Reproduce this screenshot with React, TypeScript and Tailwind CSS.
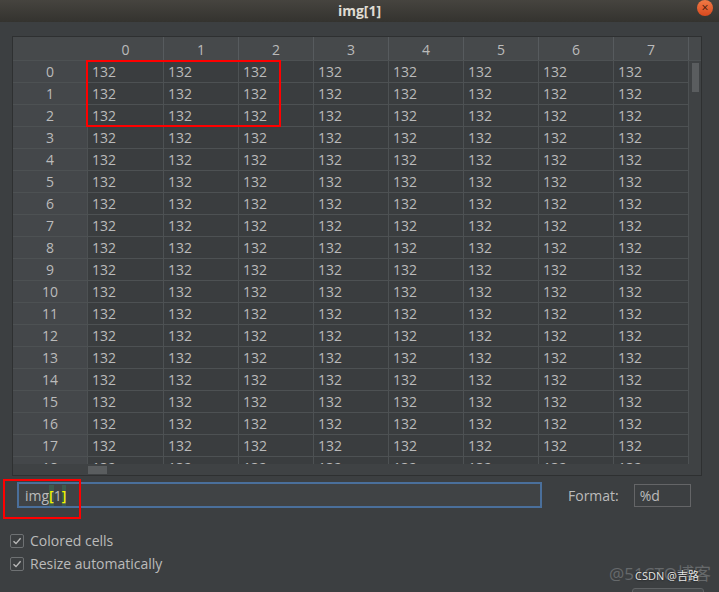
import React from 'react'

const cols = [0, 1, 2, 3, 4, 5, 6, 7]
const rows = Array.from({ length: 19 }, (_, i) => i)

const Check = () => (
  <div className="flex h-[14px] w-[14px] items-center justify-center rounded-[2px] border border-[#6e7173] bg-[#3c3f41]">
    <svg width="10" height="10" viewBox="0 0 10 10">
      <path d="M1.5 5.2 L4 7.6 L8.6 2.2" fill="none" stroke="#b9b9b9" strokeWidth="1.4" />
    </svg>
  </div>
)

const App = () => {
  return (
    <div
      className="relative flex h-[592px] w-[719px] flex-col overflow-hidden bg-[#3c3f41] text-[#bbbbbb]"
      style={{ fontFamily: '"Open Sans", "Noto Sans CJK SC", sans-serif' }}
    >
      {/* title bar */}
      <div className="relative flex h-[22px] w-full items-center justify-center bg-gradient-to-b from-[#46443f] to-[#34332f]">
        <div className="text-[14px] font-bold leading-none text-[#dfdbd2]">img[1]</div>
        {/* close button */}
        <div className="absolute right-[6px] top-[0px] flex h-[16px] w-[16px] items-center justify-center rounded-full bg-gradient-to-b from-[#f07a45] to-[#d9481d] text-[12px] leading-none text-[#3a1a0c]">
          ×
        </div>
      </div>

      {/* table area */}
      <div className="px-[12px] pt-[14px]">
        <div className="relative flex h-[440px] w-[690px] flex-col border border-[#2e3031] bg-[#3f4244]">
          {/* column header */}
          <div className="flex h-[24px] border-b border-[#4d5153] bg-[#46494b]">
            <div className="w-[75px]" />
            {cols.map((c) => (
              <div
                key={c}
                className={`flex items-end justify-center border-r border-[#575b5e] pb-[2px] text-[14px] leading-none ${c === 0 ? 'w-[76px]' : 'w-[75px]'}`}
              >
                <span className="pb-[1px]">{c}</span>
              </div>
            ))}
          </div>
          {/* body */}
          <div className="flex flex-1 overflow-hidden">
            <div className="flex w-[676px] flex-col">
              <div className="h-[403px] overflow-hidden bg-[#3a3d3f]">
                {rows.map((r) => (
                  <div key={r} className="flex h-[22px]">
                    <div className="flex w-[75px] items-center justify-center border-b border-r border-[#4d5153] bg-[#44474a] text-[14px]">
                      {r}
                    </div>
                    {cols.map((c) => (
                      <div
                        key={c}
                        className={`flex items-center border-b border-r border-[#4d5153] pl-[4px] text-[14px] ${c === 0 ? 'w-[76px]' : 'w-[75px]'}`}
                      >
                        132
                      </div>
                    ))}
                  </div>
                ))}
              </div>
              {/* horizontal scrollbar */}
              <div className="flex h-[11px] items-center bg-[#3f4244]">
                <div className="ml-[75px] h-[8px] w-[19px] bg-[#5a5d5f]" />
              </div>
            </div>
            {/* vertical scrollbar */}
            <div className="flex w-[12px] justify-center bg-[#3f4244] pt-[2px]">
              <div className="h-[29px] w-[7px] bg-[#5a5d5f]" />
            </div>
          </div>
          {/* red selection box */}
          <div className="pointer-events-none absolute left-[73px] top-[23px] h-[67px] w-[195px] border-2 border-[#ff0000]" />
        </div>
      </div>

      {/* expression + format */}
      <div className="relative mt-[6px] flex items-center px-[17px]">
        <div className="flex h-[26px] w-[525px] items-center border-2 border-[#4a6f9b] bg-[#404345] px-[6px] text-[14px]">
          <span>img</span>
          <span className="bg-[#3d5a4e] font-semibold text-[#f6f400]">[</span>
          <span>1</span>
          <span className="bg-[#3d5a4e] font-semibold text-[#f6f400]">]</span>
        </div>
        <div className="ml-[26px] text-[14px]">Format:</div>
        <div className="ml-[15px] flex h-[23px] w-[57px] items-center border border-[#646567] px-[5px] text-[14px]">
          %d
        </div>
        <div className="pointer-events-none absolute left-[3px] top-[-3px] h-[40px] w-[78px] border-2 border-[#ff0000]" />
      </div>

      {/* checkboxes */}
      <div className="mt-[23px] flex flex-col gap-[4px] px-[10px]">
        <div className="flex h-[19px] items-center gap-[6px] text-[14px]">
          <Check />
          <span>Colored cells</span>
        </div>
        <div className="flex h-[19px] items-center gap-[6px] text-[14px]">
          <Check />
          <span>Resize automatically</span>
        </div>
      </div>

      {/* watermarks */}
      <div className="absolute left-[609px] top-[561px] text-[17px] text-[#66696b]">@51CTO博客</div>
      <div className="absolute left-[635px] top-[568px] text-[11px] text-[#e8e8e8] [text-shadow:0_0_2px_#000]">
        CSDN @吉路
      </div>
      {/* button peeking at the bottom */}
      <div className="absolute left-[632px] top-[588px] h-[10px] w-[72px] rounded-[3px] border border-[#5f6264] bg-[#45484a]" />
    </div>
  )
}

export default App
